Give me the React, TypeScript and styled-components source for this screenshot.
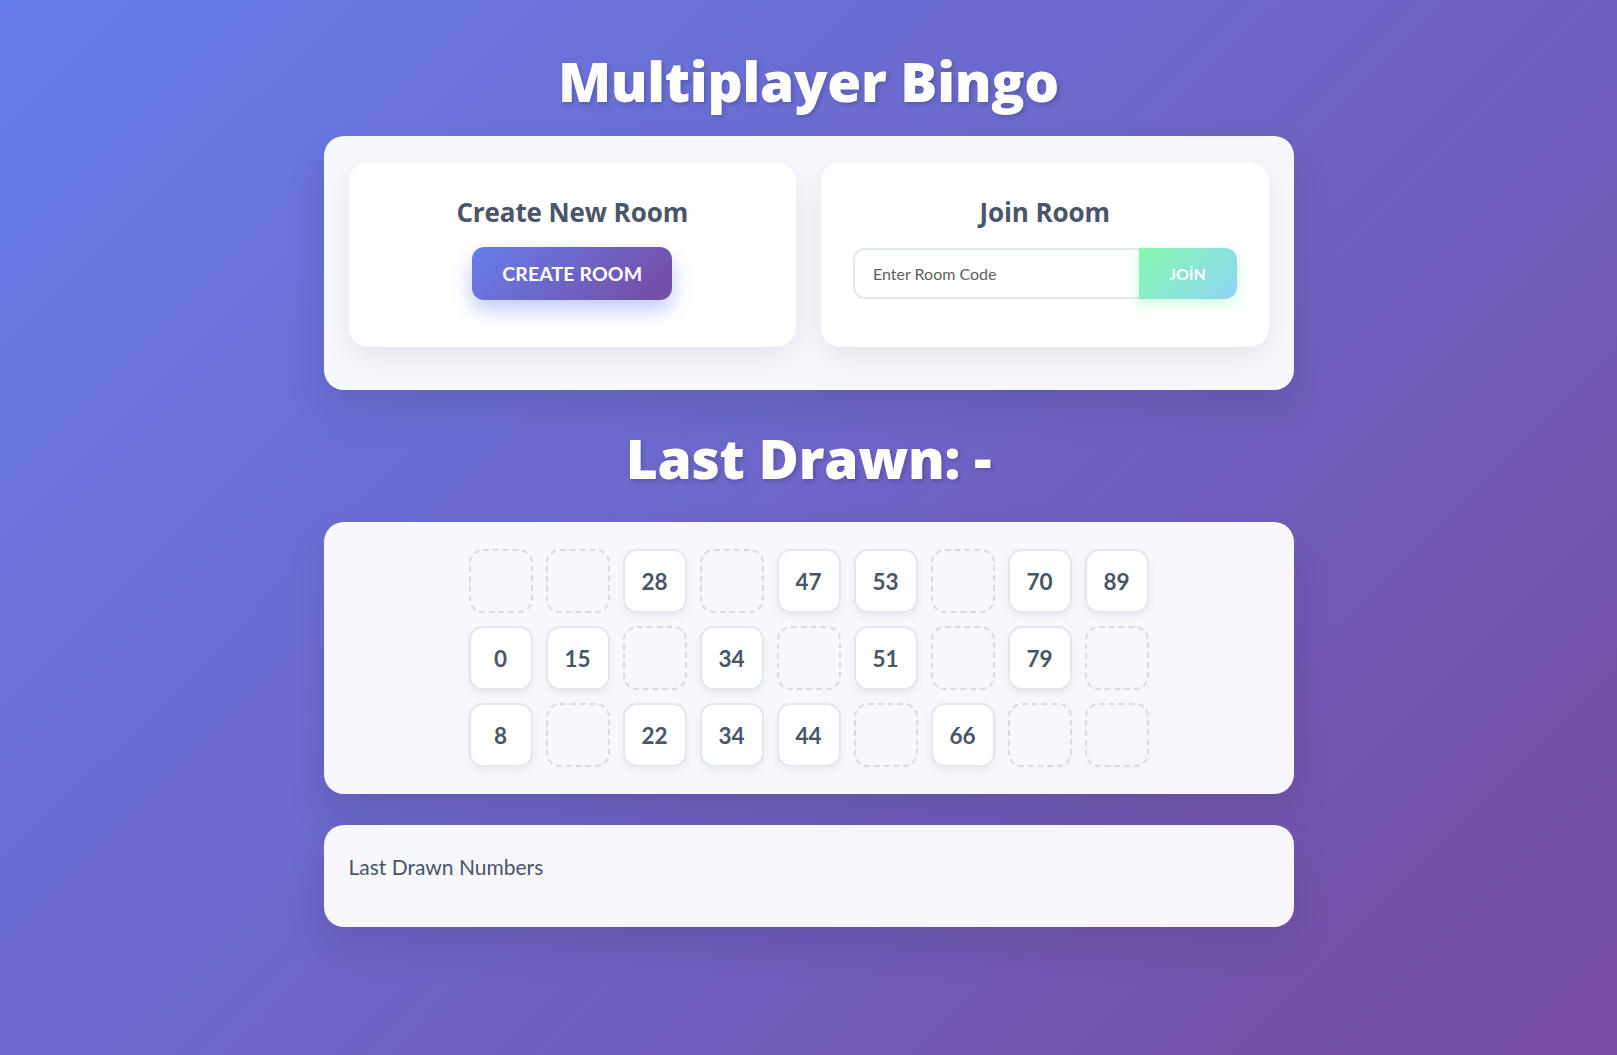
import React from "react";
import styled, { createGlobalStyle } from "styled-components";

const GlobalStyle = createGlobalStyle`
  * { box-sizing: border-box; }
  html, body { margin: 0; padding: 0; }
  body {
    min-height: 100vh;
    font-family: Lato, "Open Sans", sans-serif;
    background: linear-gradient(135deg, #667eea 0%, #764ba2 100%);
    background-attachment: fixed;
  }
`;

const Page = styled.div`
  min-height: 100vh;
  padding: 47px 0 40px;
`;

const Container = styled.div`
  width: 970px;
  margin: 0 auto;
  display: flex;
  flex-direction: column;
`;

const Title = styled.h1<{ $top?: number; $bottom?: number }>`
  margin: ${(p) => p.$top ?? 0}px 0 ${(p) => p.$bottom ?? 0}px;
  font-family: "Open Sans", Lato, sans-serif;
  font-size: 55px;
  line-height: 67px;
  font-weight: 800;
  letter-spacing: -0.3px;
  color: #ffffff;
  text-align: center;
  text-shadow: 2px 2px 4px rgba(0, 0, 0, 0.18);
`;

const Panel = styled.section<{ $pad: string; $mt?: number }>`
  margin-top: ${(p) => p.$mt ?? 0}px;
  padding: ${(p) => p.$pad};
  background: rgba(255, 255, 255, 0.95);
  border-radius: 20px;
  box-shadow: 0 20px 40px rgba(0, 0, 0, 0.1);
`;

const CardRow = styled.div`
  display: grid;
  grid-template-columns: 1fr 1fr;
  gap: 25px;
`;

const Card = styled.div`
  height: 185px;
  padding: 34px 32px 0;
  background: #ffffff;
  border-radius: 20px;
  box-shadow: 0 10px 30px rgba(0, 0, 0, 0.08);
  display: flex;
  flex-direction: column;
  align-items: center;
  gap: 18px;
`;

const CardTitle = styled.h2`
  margin: 0;
  font-family: "Open Sans", Lato, sans-serif;
  font-size: 26px;
  line-height: 32px;
  font-weight: 700;
  letter-spacing: -0.1px;
  color: #4a5568;
`;

const ActionArea = styled.div`
  height: 54px;
  width: 100%;
  display: flex;
  align-items: center;
  justify-content: center;
`;

const CreateButton = styled.button`
  height: 53px;
  padding: 0 30px;
  border: none;
  border-radius: 12px;
  background: linear-gradient(135deg, #667eea 0%, #764ba2 100%);
  color: #ffffff;
  font-family: inherit;
  font-size: 19.5px;
  font-weight: 700;
  letter-spacing: 0.1px;
  box-shadow: 0 10px 20px rgba(102, 126, 234, 0.4);
  cursor: pointer;
`;

const JoinForm = styled.div`
  width: 100%;
  height: 51px;
  display: flex;
`;

const CodeInput = styled.input`
  flex: 1;
  min-width: 0;
  height: 100%;
  padding: 0 18px;
  border: 2px solid #e2e8f0;
  border-right: none;
  border-radius: 12px 0 0 12px;
  background: #ffffff;
  font-family: inherit;
  font-size: 16px;
  color: #333;
  outline: none;
  &::placeholder { color: #5f5f5f; }
`;

const JoinButton = styled.button`
  width: 98px;
  height: 100%;
  border: none;
  border-radius: 0 12px 12px 0;
  background: linear-gradient(135deg, #84fab0 0%, #8fd3f4 100%);
  color: #ffffff;
  font-family: inherit;
  font-size: 16px;
  font-weight: 700;
  box-shadow: 0 5px 15px rgba(132, 250, 176, 0.4);
  cursor: pointer;
`;

const Board = styled.div`
  display: grid;
  grid-template-columns: repeat(9, 64px);
  grid-auto-rows: 64px;
  gap: 13px;
  justify-content: center;
`;

const Cell = styled.div<{ $empty: boolean }>`
  display: flex;
  align-items: center;
  justify-content: center;
  border-radius: 14px;
  border: 2px ${(p) => (p.$empty ? "dashed #dcdce0" : "solid #e2e8f0")};
  background: ${(p) => (p.$empty ? "transparent" : "#ffffff")};
  box-shadow: ${(p) => (p.$empty ? "none" : "0 4px 8px rgba(0, 0, 0, 0.05)")};
  font-size: 22.5px;
  font-weight: 700;
  color: #4a5568;
`;

const HistoryLabel = styled.div`
  font-size: 21px;
  line-height: 25px;
  font-weight: 400;
  color: #4a5568;
`;

const rows: (number | null)[][] = [
  [null, null, 28, null, 47, 53, null, 70, 89],
  [0, 15, null, 34, null, 51, null, 79, null],
  [8, null, 22, 34, 44, null, 66, null, null],
];

export default function App() {
  return (
    <>
      <GlobalStyle />
      <Page>
        <Container>
          <Title $bottom={22}>Multiplayer Bingo</Title>
          <Panel $pad="26px 25px 43px">
            <CardRow>
              <Card>
                <CardTitle>Create New Room</CardTitle>
                <ActionArea>
                  <CreateButton>CREATE ROOM</CreateButton>
                </ActionArea>
              </Card>
              <Card>
                <CardTitle>Join Room</CardTitle>
                <ActionArea>
                  <JoinForm>
                    <CodeInput placeholder="Enter Room Code" />
                    <JoinButton>JOİN</JoinButton>
                  </JoinForm>
                </ActionArea>
              </Card>
            </CardRow>
          </Panel>
          <Title $top={34} $bottom={31}>Last Drawn: -</Title>
          <Panel $pad="27px 25px">
            <Board>
              {rows.flatMap((row, r) =>
                row.map((n, c) => (
                  <Cell key={`${r}-${c}`} $empty={n === null}>
                    {n === null ? "" : n}
                  </Cell>
                ))
              )}
            </Board>
          </Panel>
          <Panel $pad="29px 25px 48px" $mt={31}>
            <HistoryLabel>Last Drawn Numbers</HistoryLabel>
          </Panel>
        </Container>
      </Page>
    </>
  );
}
